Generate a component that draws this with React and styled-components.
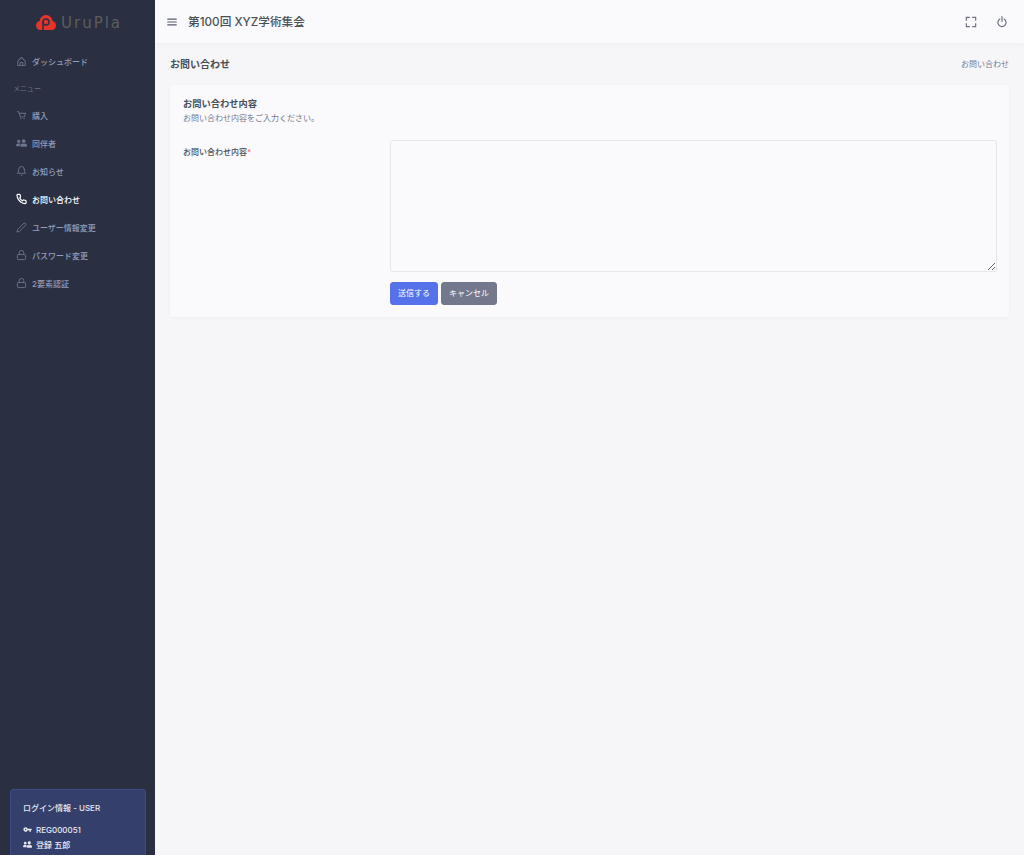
import React from "react";
import styled, { createGlobalStyle } from "styled-components";
import {
  BiHomeAlt,
  BiCart,
  BiMenu,
  BiFullscreen,
  BiPowerOff,
} from "react-icons/bi";
import { FiBell, FiPhone, FiEdit2, FiLock } from "react-icons/fi";
import { FaUserFriends } from "react-icons/fa";
import { MdVpnKey } from "react-icons/md";

const menuItems = [
  { label: "購入", icon: BiCart, size: 16 },
  { label: "同伴者", icon: FaUserFriends, size: 12, flip: true },
  { label: "お知らせ", icon: FiBell, size: 12 },
  { label: "お問い合わせ", icon: FiPhone, size: 12, active: true },
  { label: "ユーザー情報変更", icon: FiEdit2, size: 11 },
  { label: "パスワード変更", icon: FiLock, size: 12 },
  { label: "2要素認証", icon: FiLock, size: 12 },
];

const App = () => {
  return (
    <Page>
      <GlobalStyle />
      <Sidebar>
        <LogoRow>
          <LogoMark viewBox="0 0 20 16">
            <circle cx="4.500" cy="10.500" r="4.500" fill="#e5352b" />
            <circle cx="15.500" cy="10.500" r="4.500" fill="#e5352b" />
            <circle cx="10" cy="6.500" r="6.500" fill="#e5352b" />
            <rect x="4" y="9" width="12" height="6" fill="#e5352b" />
            <circle cx="10" cy="7" r="3" fill="none" stroke="#2a3042" strokeWidth="1.500" />
            <path d="M7 7v9" stroke="#2a3042" strokeWidth="1.500" />
          </LogoMark>
          <LogoText>UruPla</LogoText>
        </LogoRow>
        <MenuItem>
          <MenuIcon $size={15}>
            <BiHomeAlt />
          </MenuIcon>
          ダッシュボード
        </MenuItem>
        <MenuLabel>メニュー</MenuLabel>
        {menuItems.map((item) => (
          <MenuItem key={item.label} $active={item.active}>
            <MenuIcon $size={item.size} $flip={item.flip} $active={item.active}>
              <item.icon />
            </MenuIcon>
            {item.label}
          </MenuItem>
        ))}
        <LoginCard>
          <LoginTitle>ログイン情報 - USER</LoginTitle>
          <LoginRow>
            <MdVpnKey />
            REG000051
          </LoginRow>
          <LoginRow>
            <FlippedUser />
            登録 五郎
          </LoginRow>
        </LoginCard>
      </Sidebar>
      <Main>
        <Header>
          <HeaderLeft>
            <MenuButton>
              <BiMenu />
            </MenuButton>
            <EventTitle>第100回 XYZ学術集会</EventTitle>
          </HeaderLeft>
          <HeaderRight>
            <BiFullscreen />
            <BiPowerOff />
          </HeaderRight>
        </Header>
        <Content>
          <TitleRow>
            <PageTitle>お問い合わせ</PageTitle>
            <Breadcrumb>お問い合わせ</Breadcrumb>
          </TitleRow>
          <Card>
            <CardTitle>お問い合わせ内容</CardTitle>
            <CardSubtitle>お問い合わせ内容をご入力ください。</CardSubtitle>
            <FormRow>
              <FieldLabel>
                お問い合わせ内容<Required>*</Required>
              </FieldLabel>
              <FieldBody>
                <TextArea />
                <Buttons>
                  <Button $bg="#5572ea">送信する</Button>
                  <Button $bg="#74788d">キャンセル</Button>
                </Buttons>
              </FieldBody>
            </FormRow>
          </Card>
        </Content>
      </Main>
    </Page>
  );
};

export default App;

const GlobalStyle = createGlobalStyle`
  html, body {
    margin: 0;
    padding: 0;
    height: 100%;
    overflow: hidden;
  }
  body {
    font-family: "Inter", "Noto Sans CJK JP", sans-serif;
    background: #f6f6f9;
  }
`;

const Page = styled.div`
  display: flex;
  height: 100vh;
  overflow: hidden;
`;

const Sidebar = styled.aside`
  position: relative;
  flex: 0 0 155px;
  box-sizing: border-box;
  background: #2a3042;
  overflow: hidden;
`;

const LogoRow = styled.div`
  display: flex;
  align-items: center;
  gap: 5px;
  height: 47px;
  padding: 0 0 2px 36px;
  box-sizing: border-box;
`;

const LogoMark = styled.svg`
  width: 20px;
  height: 16px;
`;

const LogoText = styled.span`
  font-family: "DejaVu Sans", sans-serif;
  font-size: 15px;
  letter-spacing: 2px;
  color: #5d5d5d;
`;

const MenuItem = styled.div`
  display: flex;
  align-items: center;
  height: 28px;
  padding-left: 16px;
  font-size: 8px;
  font-weight: 500;
  color: ${(p) => (p.$active ? "#ffffff" : "#939cba")};
`;

const MenuIcon = styled.span`
  display: flex;
  align-items: center;
  justify-content: center;
  width: 11px;
  margin-right: 5px;
  font-size: ${(p) => p.$size}px;
  color: ${(p) => (p.$active ? "#ffffff" : "#6b7490")};
  transform: ${(p) => (p.$flip ? "scaleX(-1)" : "none")};

  svg {
    stroke-width: ${(p) => (p.$active ? 2.6 : undefined)};
  }
`;

const MenuLabel = styled.div`
  height: 26px;
  line-height: 28px;
  padding-left: 13px;
  font-size: 7px;
  color: #6a7187;
`;

const LoginCard = styled.div`
  position: absolute;
  left: 10px;
  top: 789px;
  width: 136px;
  height: 90px;
  box-sizing: border-box;
  padding: 12px 12px;
  background: #343f6c;
  border: 1px solid #3d4b80;
  border-radius: 3px;
  color: #e8eaf2;
`;

const LoginTitle = styled.div`
  font-size: 8px;
  font-weight: 500;
  line-height: 13px;
  margin-bottom: 7px;
`;

const LoginRow = styled.div`
  display: flex;
  align-items: center;
  gap: 4px;
  height: 15px;
  font-size: 8px;
  font-weight: 500;

  svg {
    width: 9px;
    height: 9px;
  }
`;

const FlippedUser = styled(FaUserFriends)`
  transform: scaleX(-1);
`;

const Main = styled.div`
  flex: 1;
  min-width: 0;
  border-left: 1px solid #e9e9ef;
  margin-left: -1px;
`;

const Header = styled.header`
  display: flex;
  align-items: center;
  justify-content: space-between;
  height: 43px;
  padding: 0 15px 0 10px;
  background: #fafafc;
  box-shadow: 0 1px 6px rgba(18, 38, 63, 0.03);
`;

const HeaderLeft = styled.div`
  display: flex;
  align-items: center;
  gap: 9px;
`;

const MenuButton = styled.span`
  display: flex;
  font-size: 14px;
  color: #555b6d;
`;

const EventTitle = styled.div`
  margin-bottom: 2px;
  font-size: 11.700px;
  font-weight: 500;
  color: #495057;
`;

const HeaderRight = styled.div`
  display: flex;
  align-items: center;
  gap: 17px;
  font-size: 14px;
  color: #6a7080;
`;

const Content = styled.main`
  padding: 0 15px;
`;

const TitleRow = styled.div`
  display: flex;
  align-items: center;
  justify-content: space-between;
  height: 40px;
  margin-bottom: 2px;
`;

const PageTitle = styled.h1`
  margin: 0;
  font-size: 10px;
  font-weight: 700;
  color: #495057;
`;

const Breadcrumb = styled.div`
  font-size: 8px;
  color: #74788d;
`;

const Card = styled.section`
  box-sizing: border-box;
  height: 232px;
  padding: 12px 12px 12px 13px;
  background: #fafafc;
  border-radius: 3px;
  box-shadow: 0 1px 4px rgba(18, 38, 63, 0.03);
`;

const CardTitle = styled.h2`
  margin: 0;
  font-size: 9.250px;
  line-height: 13px;
  font-weight: 700;
  color: #495057;
`;

const CardSubtitle = styled.p`
  margin: 2px 0 0;
  font-size: 8px;
  line-height: 13px;
  color: #74788d;
`;

const FormRow = styled.div`
  display: flex;
  margin-top: 15px;
`;

const FieldLabel = styled.div`
  flex: 0 0 207px;
  padding-top: 7px;
  font-size: 8px;
  line-height: 11px;
  font-weight: 500;
  color: #495057;
`;

const Required = styled.span`
  color: #f46a6a;
`;

const FieldBody = styled.div`
  flex: 1;
  min-width: 0;
`;

const TextArea = styled.textarea`
  display: block;
  width: 100%;
  height: 132px;
  box-sizing: border-box;
  background: #fafafc;
  border: 1px solid #e6e7ec;
  border-radius: 3px;
`;

const Buttons = styled.div`
  display: flex;
  gap: 3px;
  margin-top: 10px;
`;

const Button = styled.button`
  height: 23px;
  padding: 0 7px 2px;
  border: 1px solid ${(p) => p.$bg};
  border-radius: 3px;
  background: ${(p) => p.$bg};
  color: #fff;
  font-family: inherit;
  font-size: 8px;
  font-weight: 400;
`;
